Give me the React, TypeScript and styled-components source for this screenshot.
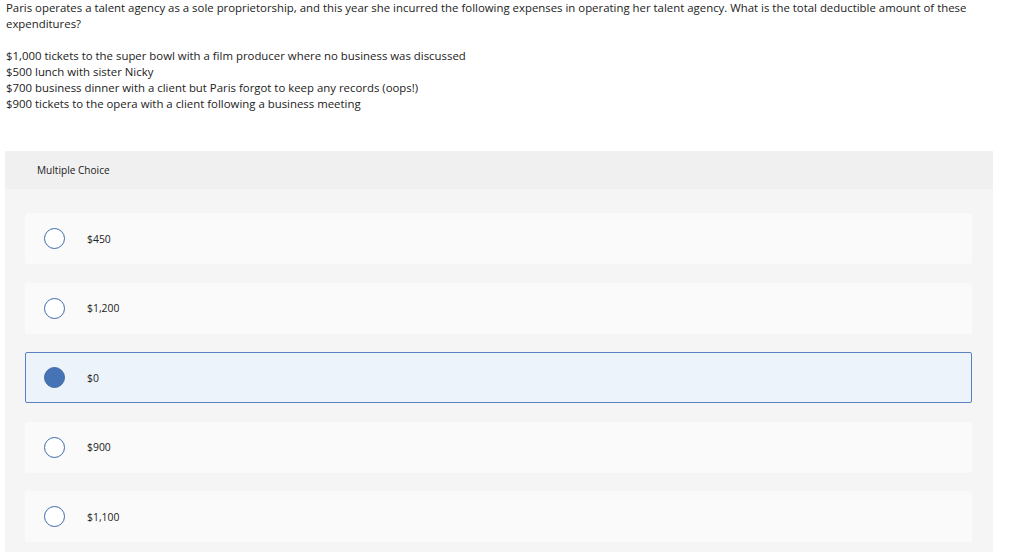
import React from "react";
import styled, { createGlobalStyle } from "styled-components";

const Global = createGlobalStyle`
  html, body { margin: 0; padding: 0; background: #fff; }
  body { font-family: "Open Sans", "Liberation Sans", sans-serif; color: #222; }
`;

const Page = styled.div`
  width: 1024px;
  padding: 0 31px 0 5px;
  box-sizing: border-box;
`;

const Question = styled.div`
  padding-left: 1px;
  font-size: 11.4px;
  line-height: 16px;
  color: #222;
`;

const Para = styled.p`
  margin: 0 0 16px 0;
  &:last-child { margin-bottom: 0; }
`;

const Card = styled.section`
  margin-top: 39px;
  background: #f5f5f5;
  padding-bottom: 10px;
`;

const CardHeader = styled.div`
  height: 38px;
  background: #f0f0f0;
  display: flex;
  align-items: center;
  padding-left: 32px;
  font-size: 10.1px;
  color: #222;
`;

const Options = styled.div`
  display: flex;
  flex-direction: column;
  gap: 18.5px;
  padding: 24px 21px 0 20px;
`;

const Option = styled.label<{ $selected?: boolean }>`
  height: 51px;
  box-sizing: border-box;
  display: flex;
  align-items: center;
  padding-left: 18px;
  background: ${(p) => (p.$selected ? "#edf3fb" : "#fafafa")};
  border: 1px solid ${(p) => (p.$selected ? "#5b82c0" : "transparent")};
  border-radius: 2px;
  font-size: 10.4px;
  color: #222;
  cursor: pointer;
`;

const Radio = styled.span<{ $selected?: boolean }>`
  width: 21px;
  height: 21px;
  box-sizing: border-box;
  border-radius: 50%;
  border: 1px solid #3e6aa8;
  background: ${(p) => (p.$selected ? "#4673b5" : "#fff")};
  flex: none;
`;

const Label = styled.span`
  margin-left: 22px;
`;

const choices = ["$450", "$1,200", "$0", "$900", "$1,100"];

export default function App() {
  return (
    <>
      <Global />
      <Page>
        <Question>
          <Para>
            Paris operates a talent agency as a sole proprietorship, and this year she incurred the following expenses in operating her talent agency. What is the total deductible amount of these expenditures?
          </Para>
          <Para>
            $1,000 tickets to the super bowl with a film producer where no business was discussed
            <br />
            $500 lunch with sister Nicky
            <br />
            $700 business dinner with a client but Paris forgot to keep any records (oops!)
            <br />
            $900 tickets to the opera with a client following a business meeting
          </Para>
        </Question>
        <Card>
          <CardHeader>Multiple Choice</CardHeader>
          <Options>
            {choices.map((c, i) => (
              <Option key={c} $selected={i === 2}>
                <Radio $selected={i === 2} />
                <Label>{c}</Label>
              </Option>
            ))}
          </Options>
        </Card>
      </Page>
    </>
  );
}
